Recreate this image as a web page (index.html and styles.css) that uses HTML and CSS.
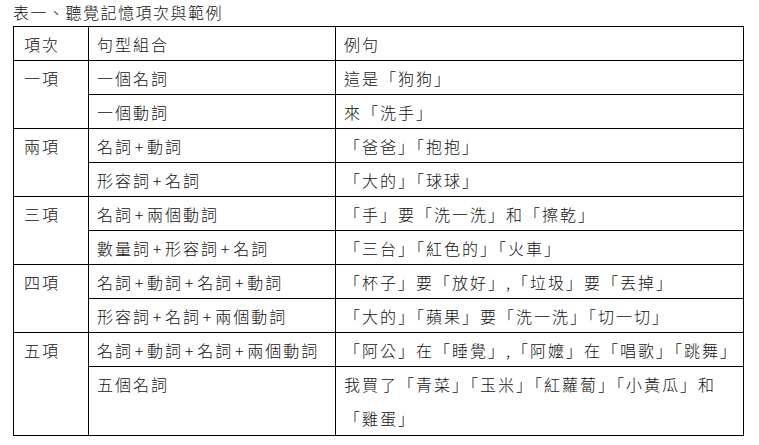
FILE: index.html
```html
<!DOCTYPE html>
<html lang="zh-Hant">
<head>
<meta charset="utf-8">
<title>表一、聽覺記憶項次與範例</title>
<link rel="stylesheet" href="styles.css">
</head>
<body>
<div class="page">
  <p class="caption">表一、聽覺記憶項次與範例</p>
  <table class="memory-table">
    <colgroup>
      <col class="col-item">
      <col class="col-pattern">
      <col class="col-example">
    </colgroup>
    <thead>
      <tr><th>項次</th><th>句型組合</th><th>例句</th></tr>
    </thead>
    <tbody>
      <tr><td rowspan="2">一項</td><td>一個名詞</td><td>這是「狗狗」</td></tr>
      <tr><td>一個動詞</td><td>來「洗手」</td></tr>
      <tr><td rowspan="2">兩項</td><td>名詞<span class="plus">+</span>動詞</td><td>「爸爸」「抱抱」</td></tr>
      <tr><td>形容詞<span class="plus">+</span>名詞</td><td>「大的」「球球」</td></tr>
      <tr><td rowspan="2">三項</td><td>名詞<span class="plus">+</span>兩個動詞</td><td>「手」要「洗一洗」和「擦乾」</td></tr>
      <tr><td>數量詞<span class="plus">+</span>形容詞<span class="plus">+</span>名詞</td><td>「三台」「紅色的」「火車」</td></tr>
      <tr><td rowspan="2">四項</td><td>名詞<span class="plus">+</span>動詞<span class="plus">+</span>名詞<span class="plus">+</span>動詞</td><td>「杯子」要「放好」,「垃圾」要「丟掉」</td></tr>
      <tr><td>形容詞<span class="plus">+</span>名詞<span class="plus">+</span>兩個動詞</td><td>「大的」「蘋果」要「洗一洗」「切一切」</td></tr>
      <tr><td rowspan="2">五項</td><td>名詞<span class="plus">+</span>動詞<span class="plus">+</span>名詞<span class="plus">+</span>兩個動詞</td><td>「阿公」在「睡覺」,「阿嬤」在「唱歌」「跳舞」</td></tr>
      <tr class="tall"><td>五個名詞</td><td>我買了「青菜」「玉米」「紅蘿蔔」「小黃瓜」和<br>「雞蛋」</td></tr>
    </tbody>
  </table>
</div>
</body>
</html>
```

FILE: styles.css
```css
html, body {
  margin: 0;
  padding: 0;
  background: #ffffff;
}

body {
  font-family: "Noto Sans CJK TC", "Noto Sans", sans-serif;
  font-weight: 300;
  color: #111111;
  font-size: 16px;
}

.page {
  padding: 0 0 0 13px;
}

.caption {
  margin: 0;
  height: 26px;
  line-height: 25px;
  font-size: 16px;
  letter-spacing: 1.5px;
}

.memory-table {
  border-collapse: collapse;
  table-layout: fixed;
  width: 730px;
}

.col-item { width: 75px; }
.col-pattern { width: 247px; }
.col-example { width: 408px; }

.memory-table th,
.memory-table td {
  border: 1px solid #000000;
  font-weight: 300;
  text-align: left;
  vertical-align: top;
  padding: 2px 0 0 8px;
  height: 31px;
  line-height: 31px;
  letter-spacing: 2px;
  white-space: nowrap;
}

.memory-table th:first-child,
.memory-table td[rowspan] {
  padding-left: 10px;
}

.memory-table tr.tall td {
  height: 65px;
  line-height: 34px;
  padding-top: 0;
}

.plus {
  margin: 0 1.75px;
}
```
